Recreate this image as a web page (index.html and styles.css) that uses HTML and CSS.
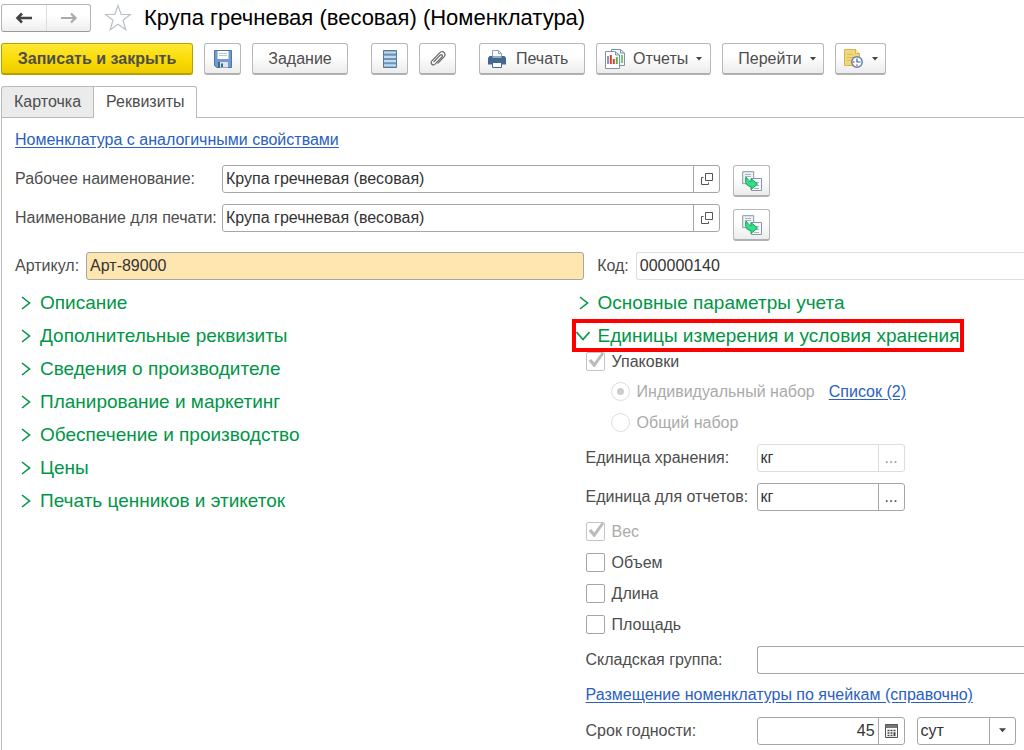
FILE: index.html
```html
<!DOCTYPE html>
<html lang="ru">
<head>
    <meta charset="UTF-8">
    <meta name="viewport" content="width=device-width, initial-scale=1.0">
    <title>Крупа гречневая (весовая) (Номенклатура)</title>
    <link rel="stylesheet" href="styles.css">
</head>
<body>
    <!-- shared icons -->
    <svg class="sprite" aria-hidden="true">
        <symbol id="i-open" viewBox="0 0 14 14">
            <path d="M5.5 1.5h7v7h-7z M3.500 5.500h-2v7h7v-2" fill="none" stroke="#555"/>
        </symbol>
        <symbol id="i-copy" viewBox="0 0 20 20">
            <path d="M.7.7h11v12H.7z" fill="#eef2f6" stroke="#8797a8"/>
            <path d="M3 3.500h6M3 5.500h6" stroke="#a9b4bf"/>
            <path d="M9.500 7.500h10v12h-10z" fill="#f5f7fa" stroke="#8797a8"/>
            <path d="M13 11.500h4M14 14.500h3M12 17.500h5" stroke="#a9b4bf"/>
            <path d="M4 6C2.500 11 4.500 15.500 9 15.500V18.500L15.500 13 9 7.500V10.500C7 10.500 6 8.500 4 6z" fill="#2fe08a" stroke="#1d9a56"/>
        </symbol>
        <symbol id="i-right" viewBox="0 0 10 14">
            <path d="M1 1l7.500 6L1 13" fill="none" stroke="#009646" stroke-width="1.600"/>
        </symbol>
        <symbol id="i-down" viewBox="0 0 14 10">
            <path d="M.5 1L7 8.500 13.500 1" fill="none" stroke="#009646" stroke-width="1.600"/>
        </symbol>
        <symbol id="i-caret" viewBox="0 0 6 4">
            <path d="M0 0h6L3 3.500z" fill="#444"/>
        </symbol>
    </svg>

    <header class="title-bar">
        <div class="nav">
            <button class="nav-btn" aria-label="Назад">
                <svg width="18" height="12" viewBox="0 0 18 12"><path d="M7 1.500L2.500 6 7 10.500M2.500 6H17" fill="none" stroke="#444" stroke-width="2.600"/></svg>
            </button>
            <button class="nav-btn" aria-label="Вперед">
                <svg width="18" height="12" viewBox="0 0 18 12"><path d="M11 1.500L15.500 6 11 10.500M15.500 6H1" fill="none" stroke="#aaa" stroke-width="2.200"/></svg>
            </button>
        </div>
        <button class="star" aria-label="Добавить в избранное">
            <svg width="28" height="28" viewBox="0 0 28 28"><path d="M14 1.500l3.200 9h9.300l-7.500 5.700 2.800 9.600L14 20.200l-7.800 5.600L9 16.200 1.500 10.500h9.300z" fill="#fff" stroke="#b9c0c8" stroke-width="1.200"/></svg>
        </button>
        <h1>Крупа гречневая (весовая) (Номенклатура)</h1>
    </header>

    <div class="toolbar">
        <button class="btn btn-main">Записать и закрыть</button>
        <button class="btn btn-icon" aria-label="Записать">
            <svg width="18" height="18" viewBox="0 0 18 18">
                <path d="M.5.5h17v17H2.500l-2-2z" fill="#6f9bce" stroke="#4c76a6"/>
                <path d="M3.500 1h11v8h-11z" fill="#fff"/>
                <path d="M5 3.500h8M5 5.500h8" stroke="#b9c6d6"/>
                <path d="M4 12h10v5.500H4z" fill="#42658f"/>
                <path d="M6 12h8v5.500H6z" fill="#dfe4ea"/>
                <path d="M7 13.500h2V17H7z" fill="#42658f"/>
            </svg>
        </button>
        <button class="btn btn-task">Задание</button>
        <span class="split"></span>
        <button class="btn btn-icon" aria-label="Структура подчиненности">
            <svg width="14" height="18" viewBox="0 0 14 18">
                <path d="M.5.5h13v17H.5z" fill="#6f93b3" stroke="#557a9b"/>
                <path d="M1 2.500h12M1 6.800h12M1 11.100h12M1 15.400h12" stroke="#bfdcf0" stroke-width="2.200"/>
            </svg>
        </button>
        <button class="btn btn-icon" aria-label="Присоединенные файлы">
            <svg width="18" height="18" viewBox="0 0 18 18">
                <path d="M5 11.500l6-6.200c1.600-1.500 3.200.2 1.900 1.700l-6.600 6.900c-2.600 2.500-5.600-.5-3.200-3.200l7.200-7.500c3.600-3.400 7.600.3 4.500 4L9 13.200" fill="none" stroke="#6a6a6a" stroke-width="1.200" stroke-linecap="round"/>
            </svg>
        </button>
        <span class="split"></span>
        <button class="btn btn-print">
            <svg width="18" height="18" viewBox="0 0 18 18">
                <path d="M4.500 8V.5h6l3 3V8" fill="#fff" stroke="#8da3ba"/>
                <path d="M10.500.5v3h3" fill="none" stroke="#8da3ba"/>
                <path d="M1.500 6h15L18 8v6.500H0V8z" fill="#44698f"/>
                <path d="M4.500 6h9v2h-9z" fill="#8fb0cf"/>
                <path d="M4.500 12.500h9v5h-9z" fill="#fff" stroke="#44698f"/>
            </svg>
            Печать
        </button>
        <button class="btn btn-reports">
            <svg width="20" height="20" viewBox="0 0 20 20">
                <path d="M6.500.5h9l4 3.500v12.500h-13z" fill="#f1f5f9" stroke="#7f93a8"/>
                <path d="M15.500.5V4h4" fill="none" stroke="#7f93a8"/>
                <path d="M17 6v8" stroke="#4fb84a" stroke-width="1.500"/>
                <path d="M.5 2.500h9l5 3.500v13.500H.5z" fill="#fff" stroke="#7f93a8"/>
                <path d="M10.500 2.500V6h4" fill="none" stroke="#7f93a8"/>
                <path d="M3 7v8" stroke="#5b7da8" stroke-width="1.500"/>
                <path d="M5.800 6v9" stroke="#e03a30" stroke-width="2"/>
                <path d="M8.800 10v5" stroke="#e03a30" stroke-width="2"/>
                <path d="M11.800 8v7" stroke="#4fb84a" stroke-width="2"/>
            </svg>
            Отчеты
            <svg class="caret" width="6" height="4"><use href="#i-caret"/></svg>
        </button>
        <button class="btn btn-go">
            Перейти
            <svg class="caret" width="6" height="4"><use href="#i-caret"/></svg>
        </button>
        <button class="btn btn-reminder" aria-label="Напоминание">
            <svg width="19" height="19" viewBox="0 0 19 19">
                <path d="M.5.5h11l4 4v12H.5z" fill="#f0d77c" stroke="#d6b552"/>
                <path d="M11.500.5v4h4" fill="#fff3bd" stroke="#d6b552"/>
                <path d="M3 5.500h6M3 8.500h8M3 11.500h4" stroke="#dcbd5c"/>
                <circle cx="13" cy="13" r="5.200" fill="#fff" stroke="#5d83b5" stroke-width="1.500"/>
                <path d="M13 9.500V13h3.500" fill="none" stroke="#2e62ad" stroke-width="1.200"/>
                <path d="M9 13h1.500M13 15.500V17" stroke="#e0453b" stroke-width="1.400"/>
            </svg>
            <svg class="caret" width="6" height="4"><use href="#i-caret"/></svg>
        </button>
    </div>

    <div class="tabs" role="tablist">
        <button class="tab" role="tab" aria-selected="false">Карточка</button>
        <button class="tab active" role="tab" aria-selected="true">Реквизиты</button>
    </div>

    <main class="panel">
        <div class="link-row"><a href="#">Номенклатура с аналогичными свойствами</a></div>

        <div class="name-row">
            <label for="workName">Рабочее наименование:</label>
            <div class="field name-field">
                <input type="text" id="workName" value="Крупа гречневая (весовая)">
                <button class="field-btn" aria-label="Открыть"><svg width="14" height="14"><use href="#i-open"/></svg></button>
            </div>
            <button class="btn btn-icon" aria-label="Заполнить"><svg width="20" height="20"><use href="#i-copy"/></svg></button>
        </div>
        <div class="name-row">
            <label for="printName">Наименование для печати:</label>
            <div class="field name-field">
                <input type="text" id="printName" value="Крупа гречневая (весовая)">
                <button class="field-btn" aria-label="Открыть"><svg width="14" height="14"><use href="#i-open"/></svg></button>
            </div>
            <button class="btn btn-icon btn-low" aria-label="Заполнить"><svg width="20" height="20"><use href="#i-copy"/></svg></button>
        </div>

        <div class="code-row">
            <div class="code-cell">
                <label for="article">Артикул:</label>
                <div class="field required"><input type="text" id="article" value="Арт-89000"></div>
            </div>
            <div class="code-cell">
                <label for="code">Код:</label>
                <div class="field readonly open-end"><input type="text" id="code" value="000000140" readonly></div>
            </div>
        </div>

        <div class="columns">
            <div class="groups">
                <button class="group"><svg width="10" height="14"><use href="#i-right"/></svg>Описание</button>
                <button class="group"><svg width="10" height="14"><use href="#i-right"/></svg>Дополнительные реквизиты</button>
                <button class="group"><svg width="10" height="14"><use href="#i-right"/></svg>Сведения о производителе</button>
                <button class="group"><svg width="10" height="14"><use href="#i-right"/></svg>Планирование и маркетинг</button>
                <button class="group"><svg width="10" height="14"><use href="#i-right"/></svg>Обеспечение и производство</button>
                <button class="group"><svg width="10" height="14"><use href="#i-right"/></svg>Цены</button>
                <button class="group"><svg width="10" height="14"><use href="#i-right"/></svg>Печать ценников и этикеток</button>
            </div>

            <div class="params">
                <button class="group"><svg width="10" height="14"><use href="#i-right"/></svg>Основные параметры учета</button>
                <button class="group group-marked" aria-expanded="true"><svg width="14" height="10"><use href="#i-down"/></svg>Единицы измерения и условия хранения</button>

                <div class="units">
                    <label class="check check-first"><input type="checkbox" class="dim" checked disabled>Упаковки</label>
                    <div class="radio-row">
                        <label class="check muted"><input type="radio" name="pack" checked disabled>Индивидуальный набор</label>
                        <a href="#">Список (2)</a>
                    </div>
                    <div class="radio-row">
                        <label class="check muted"><input type="radio" name="pack" disabled>Общий набор</label>
                    </div>
                    <div class="unit-row">
                        <label for="storeUnit">Единица хранения:</label>
                        <div class="field short readonly">
                            <input type="text" id="storeUnit" value="кг" readonly>
                            <button class="field-btn" disabled>...</button>
                        </div>
                    </div>
                    <div class="unit-row">
                        <label for="reportUnit">Единица для отчетов:</label>
                        <div class="field short">
                            <input type="text" id="reportUnit" value="кг">
                            <button class="field-btn">...</button>
                        </div>
                    </div>
                    <label class="check muted"><input type="checkbox" class="dim" checked disabled>Вес</label>
                    <label class="check"><input type="checkbox">Объем</label>
                    <label class="check"><input type="checkbox">Длина</label>
                    <label class="check"><input type="checkbox">Площадь</label>
                    <div class="unit-row">
                        <label for="storeGroup">Складская группа:</label>
                        <div class="field open-end"><input type="text" id="storeGroup"></div>
                    </div>
                    <div class="link-row"><a href="#">Размещение номенклатуры по ячейкам (справочно)</a></div>
                    <div class="unit-row">
                        <label for="shelfLife">Срок годности:</label>
                        <div class="field short">
                            <input type="text" id="shelfLife" class="number" value="45">
                            <button class="field-btn" aria-label="Калькулятор">
                                <svg width="13" height="14" viewBox="0 0 13 14">
                                    <path d="M.5.5h12v13H.5z" fill="#fff" stroke="#555"/>
                                    <path d="M1 1h11v3H1z" fill="#777"/>
                                    <path d="M2.500 6.500h2M5.500 6.500h2M2.500 9h2M5.500 9h2M2.500 11.500h2M5.500 11.500h2M8.500 6.500h2" stroke="#444" stroke-width="1.500"/>
                                    <path d="M9.500 8.200v4" stroke="#444" stroke-width="2"/>
                                </svg>
                            </button>
                        </div>
                        <div class="field period">
                            <select aria-label="Единица срока годности">
                                <option>сут</option>
                            </select>
                            <span class="field-btn"><svg width="7" height="5"><use href="#i-caret"/></svg></span>
                        </div>
                    </div>
                </div>
            </div>
        </div>
    </main>
</body>
</html>
```
FILE: styles.css
```css
* {
    box-sizing: border-box;
}
body {
    margin: 0;
    padding: 4px 0 0 1px;
    background: #fff;
    color: #4d4d4d;
    font-family: "Liberation Sans", Arial, sans-serif;
    font-size: 16px;
    line-height: 20px;
    overflow-x: hidden;
}
button, input, select {
    font: inherit;
    color: inherit;
}
button {
    cursor: pointer;
}
a {
    color: #2a60c0;
    text-underline-offset: 2px;
}
svg {
    display: block;
    flex: none;
}
.sprite {
    display: none;
}

/* title */
.title-bar {
    display: flex;
    align-items: center;
    height: 28px;
}
.nav {
    display: flex;
    height: 28px;
    border: 1px solid #b4b4b4;
    border-bottom-color: #999;
    border-radius: 3px;
    background: linear-gradient(#fff 40%, #eee);
}
.nav-btn {
    display: flex;
    align-items: center;
    justify-content: center;
    width: 44px;
    padding: 0;
    border: none;
    background: none;
}
.nav-btn + .nav-btn {
    border-left: 1px solid #ddd;
}
.star {
    margin: 0 12px 0 13px;
    padding: 0;
    border: none;
    background: none;
}
h1 {
    margin: 0;
    color: #000;
    font-size: 22px;
    font-weight: normal;
    line-height: 28px;
    white-space: nowrap;
}

/* command bar */
.toolbar {
    display: flex;
    gap: 11px;
    margin-top: 11px;
}
.split {
    width: 1px;
}
.btn {
    display: flex;
    align-items: center;
    justify-content: center;
    height: 32px;
    padding: 0;
    border: 1px solid #b8b8b8;
    border-bottom: 2px solid #b0b0b0;
    border-radius: 3px;
    background: linear-gradient(#fff 40%, #ececec);
    white-space: nowrap;
}
.btn-main {
    width: 192px;
    border-color: #b9a000;
    background: linear-gradient(#ffe835, #f9da00 60%, #edcb00);
    font-weight: bold;
}
.btn-icon {
    width: 37px;
    flex: none;
}
.btn-task {
    width: 96px;
}
.btn-print {
    justify-content: flex-start;
    gap: 10px;
    width: 106px;
    padding-left: 8px;
}
.btn-reports {
    justify-content: flex-start;
    gap: 8px;
    width: 115px;
    padding-left: 8px;
}
.btn-go {
    gap: 8px;
    width: 102px;
    padding-left: 8px;
}
.btn-reminder {
    gap: 9px;
    width: 51px;
}

/* tabs */
.tabs {
    display: flex;
    margin-top: 11px;
    border-bottom: 1px solid #b9b9b9;
}
.tab {
    height: 31px;
    padding: 0 12px;
    border: 1px solid #b9b9b9;
    border-bottom: none;
    background: #ebebeb;
    border-radius: 3px 0 0 0;
}
.tab.active {
    height: 32px;
    margin: 0 0 -1px -1px;
    padding-bottom: 2px;
    background: #fff;
    border-radius: 0 3px 0 0;
}

/* form */
.panel {
    padding: 6px 0 0 13px;
    border-left: 1px solid #b9b9b9;
}
.link-row {
    display: flex;
    align-items: center;
    height: 32px;
}
.name-row {
    display: grid;
    grid-template-columns: 207px 498px 50px;
    height: 39px;
    padding-top: 9px;
}
.name-row label {
    line-height: 28px;
    white-space: nowrap;
}
.name-row .btn {
    margin-left: 13px;
}
.name-row .btn-low {
    margin-top: 5px;
}
.field {
    display: flex;
    flex: 1;
    height: 28px;
    min-width: 0;
    border: 1px solid #a6a6a6;
    border-radius: 3px;
    background: #fff;
}
.field input, .field select {
    flex: 1;
    width: 100%;
    min-width: 0;
    padding: 0 3px;
    border: none;
    outline: none;
    background: none;
    color: #333;
    appearance: none;
}
.field .number {
    text-align: right;
}
.field-btn {
    display: flex;
    align-items: center;
    justify-content: center;
    width: 26px;
    flex: none;
    padding: 0;
    border: none;
    border-left: 1px solid #a6a6a6;
    background: none;
}
.readonly, .readonly .field-btn {
    border-color: #ddd;
}
.field-btn:disabled {
    color: #999;
}
.required {
    background: #ffe5b0;
}
.open-end {
    border-right: none;
    border-radius: 3px 0 0 3px;
}
.code-row {
    display: grid;
    grid-template-columns: 4fr 3fr;
    gap: 13px;
    padding: 18px 0 6px;
}
.code-cell {
    display: flex;
    align-items: center;
    gap: 7px;
}

/* groups */
.columns {
    display: grid;
    grid-template-columns: 5fr 4fr;
}
.group {
    display: flex;
    align-items: center;
    gap: 9px;
    height: 33px;
    padding: 0 0 0 6px;
    border: none;
    background: none;
    color: #009646;
    font-size: 19px;
    white-space: nowrap;
}
.params .group {
    padding-left: 3px;
}
.params .group-marked {
    gap: 8px;
    height: 25px;
    margin: 4px 0;
    padding: 0;
    outline: 4px solid #f00;
}
.units {
    padding-left: 10px;
}
.check {
    display: flex;
    align-items: center;
    gap: 7px;
    height: 31px;
    white-space: nowrap;
}
.check-first {
    align-items: flex-start;
    height: 24px;
}
.muted {
    color: #aaa;
}
.check input {
    position: relative;
    width: 19px;
    height: 19px;
    margin: 0;
    border: 1px solid #a6a6a6;
    border-radius: 2px;
    background: #fff;
    appearance: none;
}
.check .dim {
    border-color: #c4c4c4;
}
.check input[type="checkbox"]:checked::before {
    content: "";
    position: absolute;
    inset: 0 0 3px 2px;
    background: #bbb;
    clip-path: polygon(0 55%, 18% 42%, 38% 68%, 85% 0, 100% 0, 100% 10%, 42% 100%, 34% 100%);
}
.check input[type="radio"] {
    border-color: #ddd;
    border-radius: 50%;
}
.check input[type="radio"]:checked::before {
    content: "";
    position: absolute;
    inset: 5px;
    border-radius: 50%;
    background: #ccc;
}
.radio-row {
    display: flex;
    align-items: center;
    gap: 14px;
    padding-left: 25px;
}
.unit-row {
    display: flex;
    align-items: center;
    height: 39px;
}
.unit-row label {
    width: 171px;
    flex: none;
    white-space: nowrap;
}
.unit-row .short {
    flex: none;
    width: 148px;
}
.unit-row .period {
    flex: none;
    width: 99px;
    margin-left: 12px;
}
```
